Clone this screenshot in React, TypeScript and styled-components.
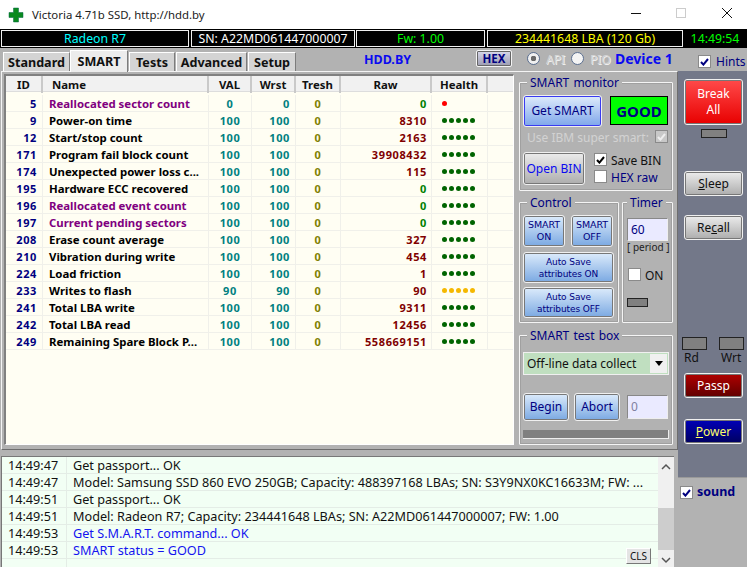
import React from "react";
import styled, { createGlobalStyle, css } from "styled-components";

const Global = createGlobalStyle`
  html, body { margin: 0; padding: 0; background: #b2b2b2; overflow: hidden; }
  * { box-sizing: border-box; }
`;
const Win = styled.div`
  position: relative; width: 747px; height: 567px; overflow: hidden;
  background: #b2b2b2; font-family: "Noto Sans", "DejaVu Sans", sans-serif; font-size: 12px; color: #000;
`;
type Box = { $x: number; $y: number; $w: number; $h: number };
const Abs = css<Box>`
  position: absolute; left: ${p => p.$x}px; top: ${p => p.$y}px; width: ${p => p.$w}px; height: ${p => p.$h}px;
`;

const TitleBar = styled.div`
  position: absolute; inset: 0 0 auto 0; height: 29px; background: #fff; display: flex; align-items: center;
  padding-left: 32px; font-size: 11.4px; color: #222;
`;
const AppIcon = styled.svg`position: absolute; left: 8px; top: 7px;`;
const WinCtl = styled.svg<{ $x: number }>`position: absolute; top: 7px; left: ${p => p.$x}px;`;

const InfoBack = styled.div`position: absolute; left: 0; top: 29px; width: 747px; height: 19px; background: #000;`;
const InfoCell = styled.div<Box & { $c: string; $bare?: boolean }>`
  ${Abs}; background: #000; color: ${p => p.$c}; border: ${p => (p.$bare ? "none" : "1px solid #f0f0f0")}; display: flex; align-items: center;
  justify-content: center; font-size: 12.3px; line-height: 1; padding-top: 1px;
`;

const TabPage = styled.div`
  position: absolute; left: 1px; top: 71px; width: 677px; height: 379px;
  border-top: 1px solid #f4f4f4; border-left: 1px solid #f4f4f4; border-right: 1px solid #6e6e6e; border-bottom: 1px solid #6e6e6e;
`;
const Tab = styled.div<Box & { $active?: boolean }>`
  ${Abs}; font-weight: 700; font-size: 12.6px; display: flex; align-items: center; justify-content: center; padding-top: ${p => (p.$active ? 0 : 1)}px;
  background: ${p => (p.$active ? "#ececec" : "#d4d4d4")};
  border-top: 1px solid #fff; border-left: 1px solid #fff; border-right: 1px solid #7c7c7c; color: #111;
  z-index: ${p => (p.$active ? 3 : 1)};
`;
const Brand = styled.div<{ $x: number; $y: number; $s: number }>`
  position: absolute; left: ${p => p.$x}px; top: ${p => p.$y}px; color: #0a0af0; font-weight: 700; font-size: ${p => p.$s}px; line-height: 1; white-space: nowrap;
`;
const HexBtn = styled.div<Box>`
  ${Abs}; border: 1px solid #f4f4f4; box-shadow: inset 0 0 0 1px #666; border-radius: 2px;
  background: linear-gradient(#d8d8ea, #9c9cb0); color: #000080; font-weight: 700; font-size: 11.5px;
  display: flex; align-items: center; justify-content: center;
`;
const Radio = styled.span<{ $x: number; $y: number; $on?: boolean }>`
  position: absolute; left: ${p => p.$x}px; top: ${p => p.$y}px; width: 13px; height: 13px; border-radius: 50%;
  border: 1px solid #5b6f90; background: #f4f4f4;
  ${p => p.$on && css`background: radial-gradient(circle, #6a6a6a 0 2.6px, #f0f0f0 3px);`}
`;
const Faint = styled.span<{ $x: number; $y: number }>`
  position: absolute; left: ${p => p.$x}px; top: ${p => p.$y}px; color: #d4d4d4; font-size: 12px; line-height: 1;
  text-shadow: 1px 1px 0 #efefef;
`;
const Check = styled.span<{ $x: number; $y: number; $dim?: boolean }>`
  position: absolute; left: ${p => p.$x}px; top: ${p => p.$y}px; width: 13px; height: 13px;
  background: ${p => (p.$dim ? "#c8c8c8" : "#fff")}; border: 1px solid #8a8a8a; display: flex; align-items: center; justify-content: center;
`;
const Label = styled.span<{ $x: number; $y: number; $c?: string; $b?: boolean; $s?: number }>`
  position: absolute; left: ${p => p.$x}px; top: ${p => p.$y}px; color: ${p => p.$c ?? "#000080"}; line-height: 1; white-space: nowrap;
  font-weight: ${p => (p.$b ? 700 : 400)}; font-size: ${p => p.$s ?? 12}px;
`;
const Tick = ({ c = "#000080" }: { c?: string }) => (
  <svg width="9" height="8" viewBox="0 0 9 8"><path d="M1 4l2.400 2.600L8 1" fill="none" stroke={c} strokeWidth="2" /></svg>
);

const TableFrame = styled.div`
  position: absolute; left: 4px; top: 74px; width: 510px; height: 371px; background: #fffef3;
  border-top: 2px solid #808080; border-left: 2px solid #808080; border-right: 1px solid #fff; border-bottom: 1px solid #fff;
  overflow: hidden;
`;
const COLS = "37px 166px 43px 44px 45px 91px 56px 1fr";
const HeadRow = styled.div`
  display: grid; grid-template-columns: ${COLS}; height: 16px; background: #f1f1f1; border-bottom: 1px solid #ddd; margin-bottom: 3px;
`;
const HeadCell = styled.div<{ $left?: boolean }>`
  font-weight: 700; font-size: 11.4px; line-height: 17px; text-align: ${p => (p.$left ? "left" : "center")};
  padding-left: ${p => (p.$left ? "9px" : 0)}; color: #111; border-right: 2px solid #c9c9c9;
`;
const Row = styled.div`
  display: grid; grid-template-columns: ${COLS}; height: 17px; border-bottom: 1px solid #f0f0ea;
`;
const Cell = styled.div<{ $c: string; $align: string; $pr?: number; $pl?: number; $name?: boolean }>`
  font-weight: 700; font-size: ${p => (p.$name ? 11.4 : 11)}px; letter-spacing: ${p => (p.$name ? 0 : 0.6)}px; line-height: 17px; color: ${p => p.$c}; text-align: ${p => p.$align};
  padding-right: ${p => p.$pr ?? 0}px; padding-left: ${p => p.$pl ?? 0}px; border-right: 1px solid #f0f0ea; white-space: nowrap; overflow: hidden;
`;
const Dots = styled.div`display: flex; gap: 2px; padding: 6px 0 0 10px; border-right: 1px solid #f0f0ea;`;
const Dot = styled.i<{ $c: string }>`display: block; width: 5px; height: 5px; border-radius: 50%; background: ${p => p.$c};`;

const Group = styled.fieldset<Box>`
  ${Abs}; margin: 0; padding: 0; border: 1px solid #f4f4f4; box-shadow: inset 0 0 0 1px #a0a0a0; border-radius: 1px;
`;
const Legend = styled.div<{ $x: number }>`
  position: absolute; left: ${p => p.$x}px; top: -7px; background: #b2b2b2; padding: 0 3px; color: #000080; font-size: 12px; line-height: 14px; white-space: nowrap; word-spacing: 1px;
`;
const Btn = styled.div<Box & { $kind: "blue" | "primary" | "grey" | "red" | "maroon" | "navy"; $s?: number }>`
  ${Abs}; display: flex; align-items: center; justify-content: center; text-align: center; border-radius: 3px;
  border: 1px solid #f0f0f0; box-shadow: inset 0 0 0 1px #777; line-height: 12px; font-size: ${p => p.$s ?? 12}px;
  ${p => p.$kind === "blue" && css`background: linear-gradient(#dcebfb, #7ba9e2); color: #000080;`}
  ${p => p.$kind === "primary" && css`background: linear-gradient(#dfecfb, #7ea6ea); color: #000080; box-shadow: inset 0 0 0 1px #3a3af0;`}
  ${p => p.$kind === "grey" && css`background: linear-gradient(#ececec, #adadad); color: #111;`}
  ${p => p.$kind === "red" && css`background: linear-gradient(#ff4a4a, #e80000); color: #fff; line-height: 16px;`}
  ${p => p.$kind === "maroon" && css`background: linear-gradient(#b00000, #600000); color: #fff;`}
  ${p => p.$kind === "navy" && css`background: linear-gradient(#0000b8, #000060); color: #ffff66;`}
`;
const SmallBtn = styled(Btn)`font-family: "DejaVu Sans", sans-serif; letter-spacing: -0.1px;`;
const OpenBin = styled(Btn)`color: #0a0af0;`;
const Good = styled.div<Box>`
  ${Abs}; background: #00ff00; border: 1px solid #000; color: #000080; font-weight: 700; font-size: 15px;
  display: flex; align-items: center; justify-content: center;
`;
const Input = styled.div<Box & { $c: string }>`
  ${Abs}; background: #eaeaff; border: 1px solid #eee; border-top-color: #888; border-left-color: #888; color: ${p => p.$c};
  font-size: 12px; line-height: 1; display: flex; align-items: center; padding-left: 3px;
`;
const Led = styled.div<Box>`${Abs}; background: #808080; border: 1px solid #222;`;
const Select = styled.div<Box>`
  ${Abs}; background: #c0dfc0; border: 1px solid #f0f0f0; font-size: 12px; color: #111; display: flex; align-items: center; padding-left: 3px;
`;
const SelectArrow = styled.div`
  position: absolute; right: 1px; top: 1px; bottom: 1px; width: 17px; background: #f0f0f0; display: flex; align-items: center; justify-content: center;
`;
const Bar = styled.div<Box>`${Abs}; background: #808080; border-bottom: 1px solid #eee; border-right: 1px solid #eee;`;

const Strip = styled.div`position: absolute; left: 678px; top: 71px; width: 69px; height: 406px; background: #737889;`;
const Log = styled.div`
  position: absolute; left: 1px; top: 456px; width: 673px; height: 111px; background: #f2fff4; border-top: 1px solid #777; border-left: 1px solid #777;
`;
const LogRow = styled.div`
  display: grid; grid-template-columns: 65px 1fr; height: 17px; border-bottom: 1px solid #e4ede6; font-size: 12.66px; line-height: 17px; width: 656px;
`;
const LogTime = styled.div`padding-left: 6px; color: #111; border-right: 1px solid #e4ede6;`;
const LogText = styled.div<{ $blue?: boolean }>`padding-left: 6px; color: ${p => (p.$blue ? "#1414f0" : "#111")}; white-space: nowrap; overflow: hidden;`;
const ScrollBar = styled.div`position: absolute; right: 0; top: 0; width: 16px; bottom: 0; background: #f0f0f0;`;
const Thumb = styled.div`position: absolute; left: 0; top: 51px; width: 16px; height: 42px; background: #cdcdcd;`;
const ScrollArrow = styled.svg<{ $top?: boolean }>`position: absolute; left: 0; ${p => (p.$top ? "top: 3px;" : "bottom: 0;")}`;
const Cls = styled.div`
  position: absolute; left: 626px; top: 548px; width: 25px; height: 16px; background: #e4e4e4; border: 1px solid #fff; border-right-color: #777; border-bottom-color: #777;
  font-size: 10px; display: flex; align-items: center; justify-content: center; color: #111;
`;
const SoundPanel = styled.div`position: absolute; left: 678px; top: 477px; width: 69px; height: 90px; background: #b2b2b2; border-top: 1px solid #999;`;

const rows: [number, string, number, number, number, string, number][] = [
  [5, "Reallocated sector count", 0, 0, 0, "0", 1],
  [9, "Power-on time", 100, 100, 0, "8310", 0],
  [12, "Start/stop count", 100, 100, 0, "2163", 0],
  [171, "Program fail block count", 100, 100, 0, "39908432", 0],
  [174, "Unexpected power loss c...", 100, 100, 0, "115", 0],
  [195, "Hardware ECC recovered", 100, 100, 0, "0", 0],
  [196, "Reallocated event count", 100, 100, 0, "0", 0],
  [197, "Current pending sectors", 100, 100, 0, "0", 0],
  [208, "Erase count average", 100, 100, 0, "327", 0],
  [210, "Vibration during write", 100, 100, 0, "454", 0],
  [224, "Load friction", 100, 100, 0, "1", 0],
  [233, "Writes to flash", 90, 90, 0, "90", 2],
  [241, "Total LBA write", 100, 100, 0, "9311", 0],
  [242, "Total LBA read", 100, 100, 0, "12456", 0],
  [249, "Remaining Spare Block P...", 100, 100, 0, "558669151", 0],
];
const purple = [5, 196, 197];
const greenRaw = [5, 195, 196, 197];
const logs: [string, string, boolean?][] = [
  ["14:49:47", "Get passport... OK"],
  ["14:49:47", "Model: Samsung SSD 860 EVO 250GB; Capacity: 488397168 LBAs; SN: S3Y9NX0KC16633M; FW: ..."],
  ["14:49:51", "Get passport... OK"],
  ["14:49:51", "Model: Radeon R7; Capacity: 234441648 LBAs; SN: A22MD061447000007; FW: 1.00"],
  ["14:49:53", "Get S.M.A.R.T. command... OK", true],
  ["14:49:53", "SMART status = GOOD", true],
];

export default function App() {
  return (
    <Win>
      <Global />
      <TitleBar>Victoria 4.71b SSD, http://hdd.by</TitleBar>
      <AppIcon width="16" height="16" viewBox="0 0 16 16">
        <path d="M5.500 1h5v4.500h4.500v5h-4.500v4.500h-5v-4.500H1v-5h4.500z" fill="#0a8a1e" stroke="#064" strokeWidth=".5" />
      </AppIcon>
      <WinCtl $x={630} width="14" height="14" viewBox="0 0 14 14"><path d="M1 6.500h10" stroke="#111" /></WinCtl>
      <WinCtl $x={674} width="14" height="14" viewBox="0 0 14 14"><rect x="2.500" y="1.500" width="9" height="9" fill="none" stroke="#ccc" /></WinCtl>
      <WinCtl $x={720} width="14" height="14" viewBox="0 0 14 14"><path d="M2 1l10 10M12 1L2 11" stroke="#111" /></WinCtl>

      <InfoBack />
      <InfoCell $x={1} $y={30} $w={188} $h={17} $c="#00ffff">Radeon R7</InfoCell>
      <InfoCell $x={191} $y={30} $w={164} $h={17} $c="#fff">SN: A22MD061447000007</InfoCell>
      <InfoCell $x={356} $y={30} $w={129} $h={17} $c="#00ff00">Fw: 1.00</InfoCell>
      <InfoCell $x={487} $y={30} $w={196} $h={17} $c="#ffff00">234441648 LBA (120 Gb)</InfoCell>
      <InfoCell $bare $x={683} $y={30} $w={64} $h={17} $c="#00ff00">14:49:54</InfoCell>

      <TabPage />
      <Tab $x={3} $y={52} $w={67} $h={19}>Standard</Tab>
      <Tab $active $x={70} $y={50} $w={58} $h={22}>SMART</Tab>
      <Tab $x={129} $y={52} $w={46} $h={19}>Tests</Tab>
      <Tab $x={176} $y={52} $w={71} $h={19}>Advanced</Tab>
      <Tab $x={248} $y={52} $w={48} $h={19}>Setup</Tab>
      <Brand $x={364} $y={54} $s={12.500}>HDD.BY</Brand>
      <HexBtn $x={476} $y={50} $w={36} $h={17}>HEX</HexBtn>
      <Radio $on $x={527} $y={52} />
      <Faint $x={546} $y={54}>API</Faint>
      <Radio $x={571} $y={52} />
      <Faint $x={590} $y={54}>PIO</Faint>
      <Brand $x={615} $y={52} $s={14}>Device 1</Brand>
      <Check $x={698} $y={55}><Tick /></Check>
      <Label $x={716} $y={56}>Hints</Label>

      <TableFrame>
        <HeadRow>
          <HeadCell>ID</HeadCell>
          <HeadCell $left>Name</HeadCell>
          <HeadCell>VAL</HeadCell>
          <HeadCell>Wrst</HeadCell>
          <HeadCell>Tresh</HeadCell>
          <HeadCell>Raw</HeadCell>
          <HeadCell>Health</HeadCell>
          <div />
        </HeadRow>
        {rows.map(r => {
          const dotC = r[6] === 2 ? "#f5b800" : "#006400";
          return (
            <Row key={r[0]}>
              <Cell $c="#000080" $align="right" $pr={5}>{r[0]}</Cell>
              <Cell $name $c={purple.includes(r[0]) ? "#800080" : "#000"} $align="left" $pl={6}>{r[1]}</Cell>
              <Cell $c="#008080" $align="center">{r[2]}</Cell>
              <Cell $c="#008080" $align="right" $pr={5}>{r[3]}</Cell>
              <Cell $c="#808000" $align="center">{r[4]}</Cell>
              <Cell $c={greenRaw.includes(r[0]) ? "#008000" : "#800000"} $align="right" $pr={4}>{r[5]}</Cell>
              {r[6] === 1 ? (
                <Dots><Dot $c="#ff0000" /></Dots>
              ) : (
                <Dots>{[0, 1, 2, 3, 4].map(i => <Dot key={i} $c={dotC} />)}</Dots>
              )}
              <div />
            </Row>
          );
        })}
      </TableFrame>

      <Group $x={519} $y={82} $w={154} $h={109}><Legend $x={7}>SMART monitor</Legend></Group>
      <Btn $kind="primary" $x={523} $y={95} $w={79} $h={32}>Get SMART</Btn>
      <Good $x={610} $y={96} $w={58} $h={29}>GOOD</Good>
      <Label $x={527} $y={132} $c="#d2d2d2">Use IBM super smart:</Label>
      <Check $dim $x={655} $y={130}><Tick c="#eee" /></Check>
      <OpenBin $kind="grey" $x={523} $y={152} $w={62} $h={33}>Open BIN</OpenBin>
      <Check $x={594} $y={153}><Tick c="#000" /></Check>
      <Label $x={611} $y={155} $c="#111">Save BIN</Label>
      <Check $x={594} $y={170} />
      <Label $x={611} $y={172}>HEX raw</Label>

      <Group $x={519} $y={202} $w={100} $h={121}><Legend $x={7}>Control</Legend></Group>
      <Group $x={622} $y={202} $w={51} $h={121}><Legend $x={4}>Timer</Legend></Group>
      <SmallBtn $kind="blue" $s={9.500} $x={523} $y={215} $w={42} $h={32}>SMART<br />ON</SmallBtn>
      <SmallBtn $kind="blue" $s={9.500} $x={571} $y={215} $w={42} $h={32}>SMART<br />OFF</SmallBtn>
      <SmallBtn $kind="blue" $s={9} $x={523} $y={252} $w={91} $h={31}>Auto Save<br />attributes ON</SmallBtn>
      <SmallBtn $kind="blue" $s={9} $x={523} $y={287} $w={91} $h={31}>Auto Save<br />attributes OFF</SmallBtn>
      <Input $x={627} $y={218} $w={41} $h={23} $c="#000080">60</Input>
      <Label $x={627} $y={242} $s={10} $c="#222">[ period ]</Label>
      <Check $x={628} $y={268} />
      <Label $x={645} $y={270} $c="#111">ON</Label>
      <Led $x={627} $y={298} $w={21} $h={9} />

      <Group $x={519} $y={335} $w={154} $h={110}><Legend $x={7}>SMART test box</Legend></Group>
      <Select $x={523} $y={352} $w={146} $h={23}>Off-line data collect
        <SelectArrow><svg width="8" height="5" viewBox="0 0 8 5"><path d="M0 0h8L4 5z" fill="#000" /></svg></SelectArrow>
      </Select>
      <Btn $kind="blue" $x={523} $y={393} $w={46} $h={28}>Begin</Btn>
      <Btn $kind="blue" $x={574} $y={393} $w={46} $h={28}>Abort</Btn>
      <Input $x={627} $y={395} $w={41} $h={24} $c="#8080a0">0</Input>
      <Bar $x={523} $y={430} $w={146} $h={9} />

      <Strip />
      <Btn $kind="red" $x={684} $y={79} $w={59} $h={46}>Break<br />All</Btn>
      <Led $x={701} $y={129} $w={26} $h={9} />
      <Btn $kind="grey" $x={684} $y={171} $w={59} $h={25}><span><u>S</u>leep</span></Btn>
      <Btn $kind="grey" $x={684} $y={215} $w={59} $h={25}><span>Re<u>c</u>all</span></Btn>
      <Led $x={682} $y={337} $w={25} $h={13} />
      <Led $x={719} $y={337} $w={25} $h={13} />
      <Label $x={684} $y={352} $c="#111">Rd</Label>
      <Label $x={721} $y={352} $c="#111">Wrt</Label>
      <Btn $kind="maroon" $x={684} $y={373} $w={59} $h={25}>Passp</Btn>
      <Btn $kind="navy" $x={684} $y={419} $w={59} $h={25}><span><u>P</u>ower</span></Btn>

      <Log>
        {logs.map((l, i) => (
          <LogRow key={i}><LogTime>{l[0]}</LogTime><LogText $blue={l[2]}>{l[1]}</LogText></LogRow>
        ))}
        <LogRow><LogTime /><LogText /></LogRow>
        <ScrollBar>
          <Thumb />
          <ScrollArrow $top width="16" height="15" viewBox="0 0 16 15"><path d="M4 9l4-4 4 4" fill="none" stroke="#555" strokeWidth="1.500" /></ScrollArrow>
          <ScrollArrow width="16" height="15" viewBox="0 0 16 15"><path d="M4 6l4 4 4-4" fill="none" stroke="#555" strokeWidth="1.500" /></ScrollArrow>
        </ScrollBar>
      </Log>
      <Cls>CLS</Cls>
      <SoundPanel />
      <Check $x={680} $y={486}><Tick /></Check>
      <Label $x={697} $y={486} $b $s={12.500}>sound</Label>
    </Win>
  );
}
